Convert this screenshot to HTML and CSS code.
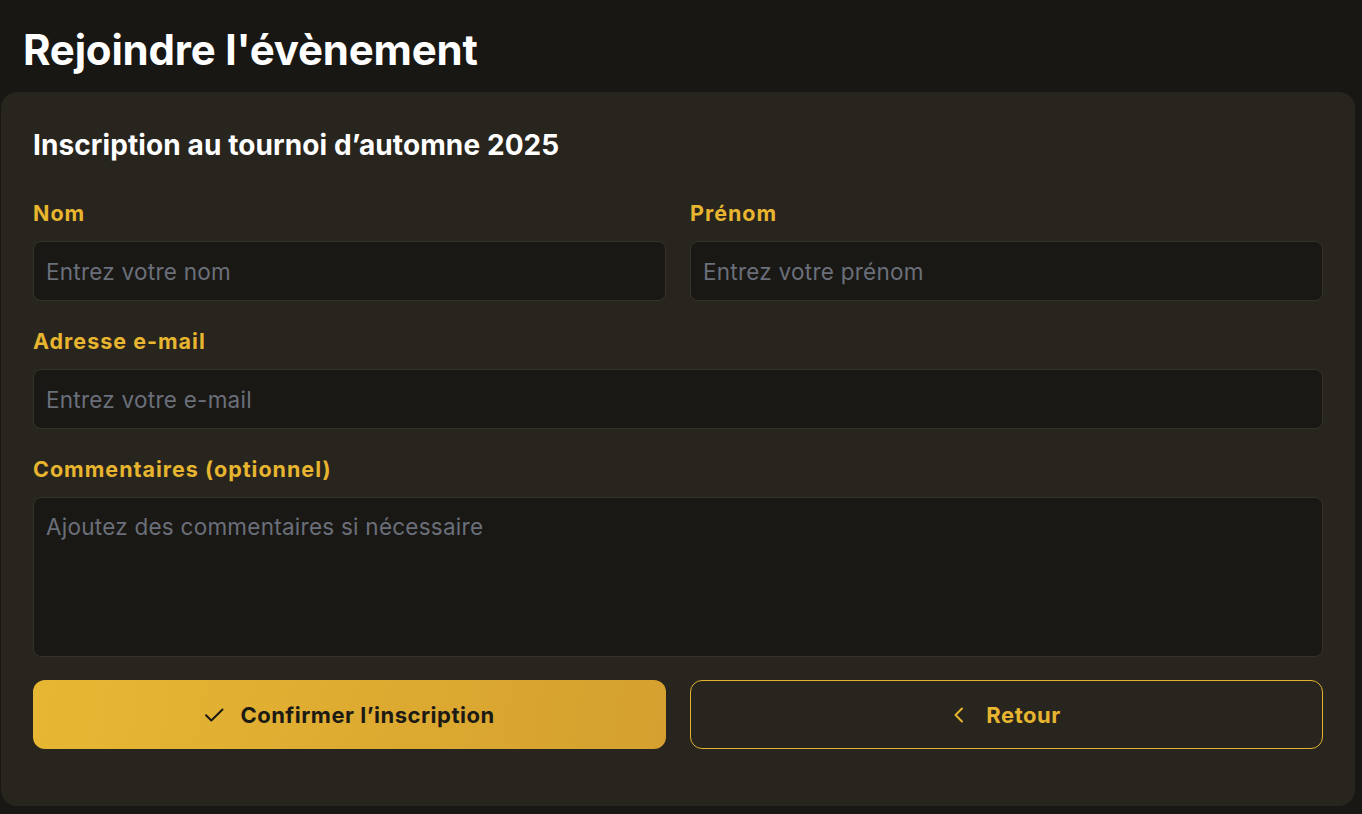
FILE: index.html
```html
<!DOCTYPE html>
<html lang="fr">
<head>
<meta charset="utf-8">
<title>Rejoindre l'évènement</title>
<link rel="stylesheet" href="styles.css">
</head>
<body>
<main class="page">
  <h1 class="title">Rejoindre l'évènement</h1>
  <section class="card">
    <h2 class="subtitle">Inscription au tournoi d’automne 2025</h2>
    <form class="form">
      <div class="row">
        <div class="field">
          <label class="label">Nom</label>
          <input class="input" type="text" placeholder="Entrez votre nom">
        </div>
        <div class="field">
          <label class="label">Prénom</label>
          <input class="input" type="text" placeholder="Entrez votre prénom">
        </div>
      </div>
      <div class="field">
        <label class="label">Adresse e-mail</label>
        <input class="input" type="email" placeholder="Entrez votre e-mail">
      </div>
      <div class="field">
        <label class="label">Commentaires (optionnel)</label>
        <textarea class="input textarea" placeholder="Ajoutez des commentaires si nécessaire"></textarea>
      </div>
      <div class="row actions">
        <button type="button" class="btn btn-primary">
          <svg class="ico" width="20" height="14" viewBox="0 0 20 14" fill="none" stroke="currentColor" stroke-width="2" stroke-linecap="round" stroke-linejoin="round"><path d="M2 7.2l5.3 5.3L18.5 1.5"/></svg>
          <span>Confirmer l’inscription</span>
        </button>
        <button type="button" class="btn btn-outline">
          <svg class="ico ico-back" width="12" height="16" viewBox="0 0 12 16" fill="none" stroke="currentColor" stroke-width="2" stroke-linecap="round" stroke-linejoin="round"><path d="M10 1.5L3.5 8l6.5 6.5"/></svg>
          <span>Retour</span>
        </button>
      </div>
    </form>
  </section>
</main>
</body>
</html>
```

FILE: styles.css
```css
* { box-sizing: border-box; }
html, body { margin: 0; padding: 0; }
body {
  background: #181713;
  font-family: Inter, "Noto Sans", sans-serif;
  color: #ffffff;
  width: 1362px;
  height: 814px;
  overflow: hidden;
}
.page {
  display: flex;
  flex-direction: column;
  padding: 0 7px 0 1px;
}
.title {
  margin: 0;
  padding: 24px 0 0 22px;
  height: 92px;
  font-size: 42px;
  font-weight: 700;
  letter-spacing: -0.2px;
  line-height: 52px;
  color: #ffffff;
}
.card {
  background: #28251e;
  border-radius: 16px;
  padding: 127px 32px 57px 32px;
  padding-top: 35px;
}
.subtitle {
  margin: 0 0 38px 0;
  font-size: 28px;
  font-weight: 700;
  letter-spacing: 0.1px;
  line-height: 36px;
  color: #ffffff;
}
.form {
  display: flex;
  flex-direction: column;
  gap: 28px;
}
.row {
  display: grid;
  grid-template-columns: 1fr 1fr;
  gap: 24px;
}
.field {
  display: flex;
  flex-direction: column;
  gap: 16px;
}
.label {
  font-size: 21.5px;
  font-weight: 700;
  line-height: 24px;
  color: #e7b52f;
  letter-spacing: 1px;
}
.input {
  height: 60px;
  background: #191814;
  border: 1px solid #36322a;
  border-radius: 8px;
  padding: 0 12px;
  font-family: Inter, "Noto Sans", sans-serif;
  font-size: 22.5px;
  letter-spacing: 0.25px;
  color: #ffffff;
  outline: none;
}
.input::placeholder { color: #6b6f7a; }
.textarea {
  height: 160px;
  padding: 15px 12px;
  resize: none;
  line-height: 28px;
}
.actions { margin-top: -5px; }
.btn {
  height: 69px;
  border-radius: 12px;
  display: flex;
  align-items: center;
  justify-content: center;
  gap: 16px;
  font-family: Inter, "Noto Sans", sans-serif;
  font-size: 22px;
  font-weight: 700;
  letter-spacing: 0.5px;
  cursor: pointer;
}
.btn-primary {
  background: linear-gradient(100deg, #e7b733 0%, #d5a02f 100%);
  border: none;
  color: #1b1a15;
}
.btn-outline {
  background: transparent;
  border: 1.5px solid #e2b22f;
  color: #e7b52f;
  gap: 22px;
}
.ico { flex: none; }
```
